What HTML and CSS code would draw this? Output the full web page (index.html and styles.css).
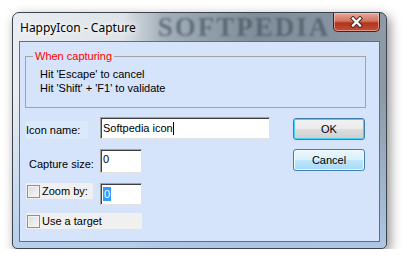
FILE: index.html
```html
<!DOCTYPE html>
<html lang="en">
<head>
    <meta charset="UTF-8">
    <title>HappyIcon - Capture</title>
    <link rel="stylesheet" href="styles.css">
</head>
<body>
    <div class="window">
        <div class="titlebar">
            <span class="title">HappyIcon - Capture</span>
            <span class="watermark">SOFTPEDIA</span>
            <button class="close">
                <svg width="13" height="12" viewBox="0 0 13 12">
                    <path d="M3 2.5 L10 9.5 M10 2.5 L3 9.5" stroke="#3b2420" stroke-width="4.2" stroke-linecap="square"/>
                    <path d="M3 2.5 L10 9.5 M10 2.5 L3 9.5" stroke="#ffffff" stroke-width="2.4" stroke-linecap="square"/>
                </svg>
            </button>
        </div>
        <div class="client">
            <fieldset class="hint">
                <legend>When capturing</legend>
                <p>Hit 'Escape' to cancel</p>
                <p>Hit 'Shift' + 'F1' to validate</p>
            </fieldset>
            <div class="main">
                <div class="form">
                    <label class="lbl name">Icon name:</label>
                    <div class="field wide">Softpedia icon<span class="caret"></span></div>

                    <label class="lbl size">Capture size:</label>
                    <div class="field small tall">0</div>

                    <label class="check"><span class="box"></span>Zoom by:</label>
                    <div class="field small"><span class="sel">0</span></div>

                    <label class="check full"><span class="box"></span>Use a target</label>
                </div>
                <div class="actions">
                    <button class="btn default">OK</button>
                    <button class="btn hover">Cancel</button>
                </div>
            </div>
        </div>
    </div>
</body>
</html>
```

FILE: styles.css
```css
body {
    margin: 0;
    background: #ffffff;
    font-family: "Liberation Sans", Arial, sans-serif;
    font-size: 11px;
    color: #000;
}
.window {
    margin: 12px 0 0 12px;
    width: 373px;
    height: 235px;
    border: 1px solid #3c434a;
    border-radius: 7px 7px 5px 5px;
    background:
        linear-gradient(180deg, rgba(255,255,255,0) 35%, rgba(176,204,236,0.9) 100%),
        linear-gradient(90deg, #e9edf1 0, #dde3e8 110px, #a3b0ba 150px, #7f8e9a 240px, #8693a0 320px, #8e9aa6 100%);
    box-shadow: 3px 4px 12px rgba(0, 0, 0, 0.45);
    display: flex;
    flex-direction: column;
}
.titlebar {
    height: 28px;
    display: flex;
    align-items: flex-start;
    overflow: hidden;
}
.title {
    font-family: "Noto Sans", "Open Sans", sans-serif;
    font-size: 12px;
    margin: 6px 0 0 7px;
    text-shadow: 0 0 6px #fff, 0 0 10px #fff;
}
.watermark {
    font-family: "Liberation Serif", serif;
    font-weight: bold;
    font-size: 27px;
    line-height: 28px;
    letter-spacing: 2px;
    color: rgba(62, 76, 88, 0.6);
    filter: blur(1.2px);
    margin: 0 0 0 22px;
}
.close {
    margin: 0 6px 0 auto;
    width: 47px;
    height: 19px;
    flex: none;
    padding: 0;
    border: 1px solid #4a2019;
    border-top: none;
    border-radius: 0 0 5px 5px;
    background: linear-gradient(180deg, #e8a898 0, #d2735d 45%, #b3341c 55%, #c0503a 100%);
    box-shadow: inset 0 0 0 1px rgba(255, 220, 210, 0.5);
    display: flex;
    align-items: center;
    justify-content: center;
}
.client {
    flex: 1;
    margin: 0 6px 6px 6px;
    border: 1px solid #5f6e80;
    background: #d5e3fb;
    display: flex;
    flex-direction: column;
}
.hint {
    margin: 8px 13px 0 5px;
    padding: 4px 0 12px 14px;
    border: 1px solid #a3a3a3;
}
.hint legend {
    margin-left: -7px;
    padding: 0 2px;
    line-height: 13px;
    color: #ff0000;
}
.hint p {
    margin: 0;
    line-height: 14px;
}
.main {
    display: flex;
    margin-top: 9px;
}
.form {
    margin-left: 6px;
    display: grid;
    grid-template-columns: 74px auto;
    row-gap: 10px;
    align-items: start;
}
.lbl {
    line-height: 14px;
}
.name {
    margin-top: 4px;
    width: 62px;
    padding: 2px 0;
    background: #dce9fb;
}
.size {
    align-self: end;
    padding: 0 0 2px 3px;
}
.field {
    box-sizing: border-box;
    height: 22px;
    padding: 1px 2px;
    line-height: 14px;
    background: #fff;
    border-top: 1px solid #a0a0a0;
    border-left: 1px solid #a0a0a0;
    border-right: 1px solid #e3e3e3;
    border-bottom: 1px solid #e3e3e3;
    box-shadow: inset 1px 1px 0 #404040;
    display: flex;
    align-items: center;
}
.wide {
    width: 170px;
}
.small {
    width: 42px;
}
.tall {
    height: 24px;
    align-items: flex-start;
    padding-top: 2px;
}
.caret {
    width: 1px;
    height: 13px;
    background: #000;
}
.sel {
    background: #3399ff;
    color: #fff;
    padding: 0 1px;
}
.check {
    box-sizing: border-box;
    width: 67px;
    height: 16px;
    padding-left: 1px;
    background: #f0f0f0;
    display: flex;
    align-items: center;
    gap: 2px;
}
.check.full {
    grid-column: 1 / -1;
    width: 116px;
    margin-top: -2px;
}
.box {
    box-sizing: border-box;
    width: 13px;
    height: 13px;
    border: 1px solid #8e8f8f;
    background: linear-gradient(135deg, #dcdcdc, #f7f7f7);
    box-shadow: inset 0 0 0 1px #f4f4f4;
}
.actions {
    margin: 1px 14px 0 auto;
    display: flex;
    flex-direction: column;
    gap: 9px;
}
.btn {
    width: 72px;
    height: 22px;
    padding: 0;
    font-family: "Liberation Sans", Arial, sans-serif;
    font-size: 11px;
    color: #000;
    border: 1px solid #707070;
    border-radius: 3px;
    background: linear-gradient(180deg, #f2f2f2 0, #ebebeb 50%, #dddddd 51%, #cfcfcf 100%);
    box-shadow: inset 0 0 0 1px #fcfcfc;
}
.btn.default {
    border-color: #3c7fb1;
    box-shadow: inset 0 0 0 1px #48d0f5;
}
.btn.hover {
    border-color: #3c7fb1;
    background: linear-gradient(180deg, #eaf6fd 0, #d9f0fc 50%, #bee6fd 51%, #a7d9f5 100%);
    box-shadow: inset 0 0 0 1px #f4fbfe;
}
```
